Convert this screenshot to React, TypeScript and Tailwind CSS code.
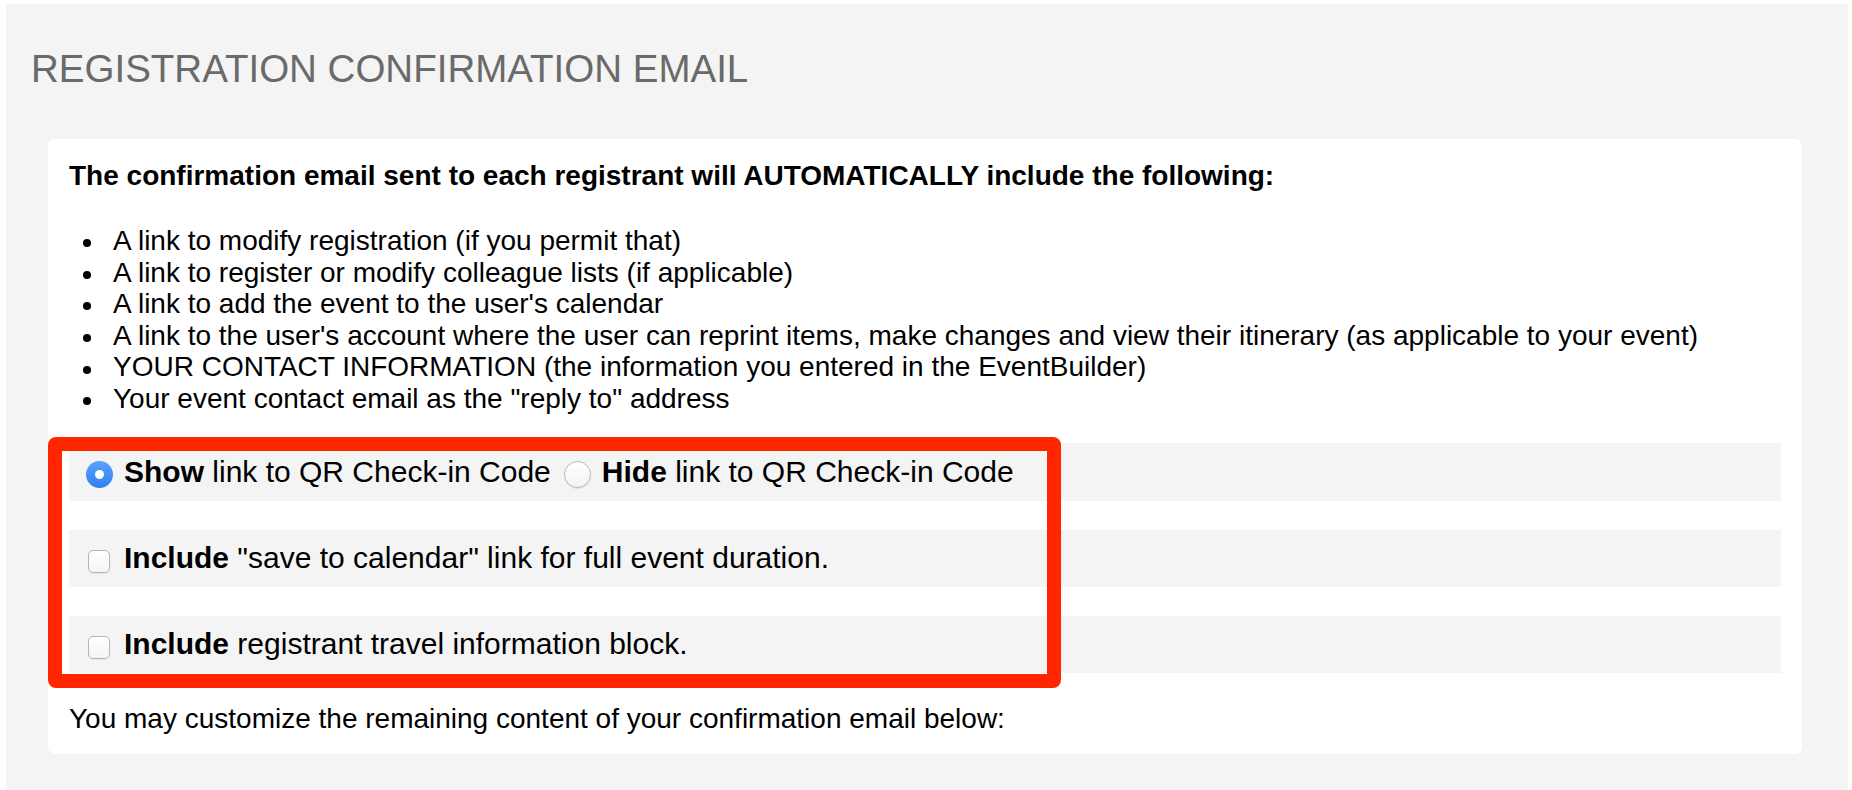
const bullets = [
  "A link to modify registration (if you permit that)",
  "A link to register or modify colleague lists (if applicable)",
  "A link to add the event to the user's calendar",
  "A link to the user's account where the user can reprint items, make changes and view their itinerary (as applicable to your event)",
  "YOUR CONTACT INFORMATION (the information you entered in the EventBuilder)",
  'Your event contact email as the "reply to" address',
]

function Radio({ checked }: { checked?: boolean }) {
  if (checked) {
    return (
      <span className="mt-[6px] flex h-[27px] w-[27px] shrink-0 items-center justify-center rounded-full bg-gradient-to-b from-[#5aa2fa] to-[#2f7ff2]">
        <span className="h-[9px] w-[9px] rounded-full bg-white" />
      </span>
    )
  }
  return (
    <span className="mt-[6px] block h-[27px] w-[27px] shrink-0 rounded-full border border-[#b8b8b8] bg-gradient-to-b from-white to-[#f3f3f3] shadow-[0_1px_1px_rgba(0,0,0,0.08)]" />
  )
}

function Checkbox() {
  return (
    <span className="ml-[2px] mt-[6px] block h-[23px] w-[22px] shrink-0 rounded-[5px] border border-[#b5b5b5] bg-gradient-to-b from-white to-[#f5f5f5] shadow-[0_1px_1px_rgba(0,0,0,0.06)]" />
  )
}

export default function App() {
  return (
    <div
      className="min-h-[790px] bg-white pl-[6px] pr-[4px] pt-[4px] text-black"
      style={{ fontFamily: '"Liberation Sans", Arial, sans-serif' }}
    >
      <div className="min-h-[786px] bg-[#f4f4f4] pl-[42px] pr-[46px]">
        <div className="-ml-[17px] pt-[46px] text-[38.5px] leading-[38px] text-[#6a6a6a]">
          REGISTRATION CONFIRMATION EMAIL
        </div>

        <div className="mt-[51px] rounded-[7px] bg-white px-[21px] pb-[19px] pt-[21px] text-[28px] leading-[32px]">
          <div className="font-bold">
            The confirmation email sent to each registrant will AUTOMATICALLY include the following:
          </div>

          <ul className="mt-[33px] leading-[31.6px]">
            {bullets.map((b) => (
              <li key={b} className="flex items-center">
                <span className="ml-[14px] mt-[5px] h-[8px] w-[8px] shrink-0 rounded-full bg-black" />
                <span className="ml-[22px]">{b}</span>
              </li>
            ))}
          </ul>

          <div className="relative mt-[28px] flex flex-col gap-[29px] text-[30px]">
            <div className="flex h-[58px] items-center bg-[#f4f4f4] pl-[17px]">
              <Radio checked />
              <span className="ml-[11px]">
                <b>Show</b> link to QR Check-in Code
              </span>
              <span className="ml-[13px] flex">
                <Radio />
              </span>
              <span className="ml-[11px]">
                <b>Hide</b> link to QR Check-in Code
              </span>
            </div>
            <div className="flex h-[57px] items-center bg-[#f4f4f4] pl-[17px]">
              <Checkbox />
              <span className="ml-[14px]">
                <b>Include</b> "save to calendar" link for full event duration.
              </span>
            </div>
            <div className="flex h-[57px] items-center bg-[#f4f4f4] pl-[17px]">
              <Checkbox />
              <span className="ml-[14px]">
                <b>Include</b> registrant travel information block.
              </span>
            </div>

            {/* annotation box */}
            <div className="pointer-events-none absolute left-[-21px] top-[-6px] h-[251px] w-[1013px] rounded-[8px] border-[14px] border-[#ff2600]" />
          </div>

          <div className="mt-[30px]">You may customize the remaining content of your confirmation email below:</div>
        </div>
      </div>
    </div>
  )
}
